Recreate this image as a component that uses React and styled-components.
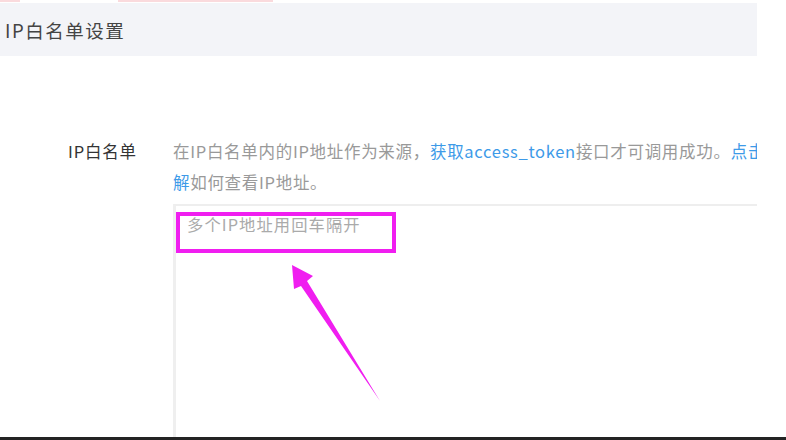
import React from 'react';
import styled, { createGlobalStyle } from 'styled-components';

const GlobalStyle = createGlobalStyle`
  html, body {
    margin: 0;
    padding: 0;
    background: #ffffff;
  }
  body {
    font-family: "Noto Sans CJK SC", "Noto Sans", sans-serif;
  }
`;

const Page = styled.div`
  position: relative;
  width: 786px;
  height: 440px;
  overflow: hidden;
  background: #fff;
`;

const TopStrip = styled.div`
  display: flex;
  height: 3px;
`;

const RedMark = styled.div`
  height: 2px;
  width: ${(props) => props.w}px;
  margin-left: ${(props) => props.gap}px;
  background: #fadadd;
`;

const Frame = styled.div`
  width: 757px;
  overflow: hidden;
`;

const Header = styled.div`
  height: 53px;
  display: flex;
  align-items: center;
  padding-left: 5px;
  background: #f3f4f8;
  color: #444;
  font-size: 18.5px;
  letter-spacing: 1.5px;
`;

const Body = styled.div`
  padding-top: 80px;
`;

const FormRow = styled.div`
  display: grid;
  grid-template-columns: 173px 1fr;
`;

const Label = styled.div`
  padding-left: 68px;
  font-size: 16.5px;
  letter-spacing: 0.8px;
  line-height: 31px;
  color: #333;
  white-space: nowrap;
`;

const Content = styled.div`
  min-width: 0;
`;

const Desc = styled.div`
  font-size: 16.5px;
  letter-spacing: 0.7px;
  line-height: 31px;
  color: #999;
  white-space: nowrap;
`;

const Link = styled.a`
  color: #3d9ae8;
  text-decoration: none;
`;

const Area = styled.textarea`
  display: block;
  box-sizing: border-box;
  margin-top: 6px;
  width: 640px;
  height: 233px;
  padding: 6px 11px;
  border: none;
  border-left: 3px solid #efefef;
  border-top: 2px solid #eeeeee;
  outline: none;
  resize: none;
  font-family: inherit;
  font-size: 16.3px;
  letter-spacing: 1.1px;
  line-height: 24px;
  color: #333;
  background: #fff;

  &::placeholder {
    color: #aaa;
  }
`;

const BottomBar = styled.div`
  height: 3px;
  background: #232323;
`;

const Highlight = styled.div`
  position: absolute;
  left: 176px;
  top: 212px;
  width: 220px;
  height: 41px;
  box-sizing: border-box;
  border: 4px solid #f01ef0;
  pointer-events: none;
`;

const Overlay = styled.svg`
  position: absolute;
  left: 0;
  top: 0;
  pointer-events: none;
`;

export default function App() {
  return (
    <Page>
      <GlobalStyle />
      <TopStrip>
        <RedMark w={20} gap={0} />
        <RedMark w={155} gap={98} />
      </TopStrip>
      <Frame>
        <Header>IP白名单设置</Header>
        <Body>
          <FormRow>
            <Label>IP白名单</Label>
            <Content>
              <Desc>
                在IP白名单内的IP地址作为来源，<Link>获取access_token</Link>接口才可调用成功。<Link>点击了</Link>
                <br />
                <Link>解</Link>如何查看IP地址。
              </Desc>
              <Area placeholder="多个IP地址用回车隔开" readOnly />
            </Content>
          </FormRow>
        </Body>
      </Frame>
      <BottomBar />
      <Highlight />
      <Overlay width="786" height="440" viewBox="0 0 786 440">
        <polygon
          points="292,265 313,276 307,281 380,401 301,286 294,289"
          fill="#f01ef0"
        />
      </Overlay>
    </Page>
  );
}
